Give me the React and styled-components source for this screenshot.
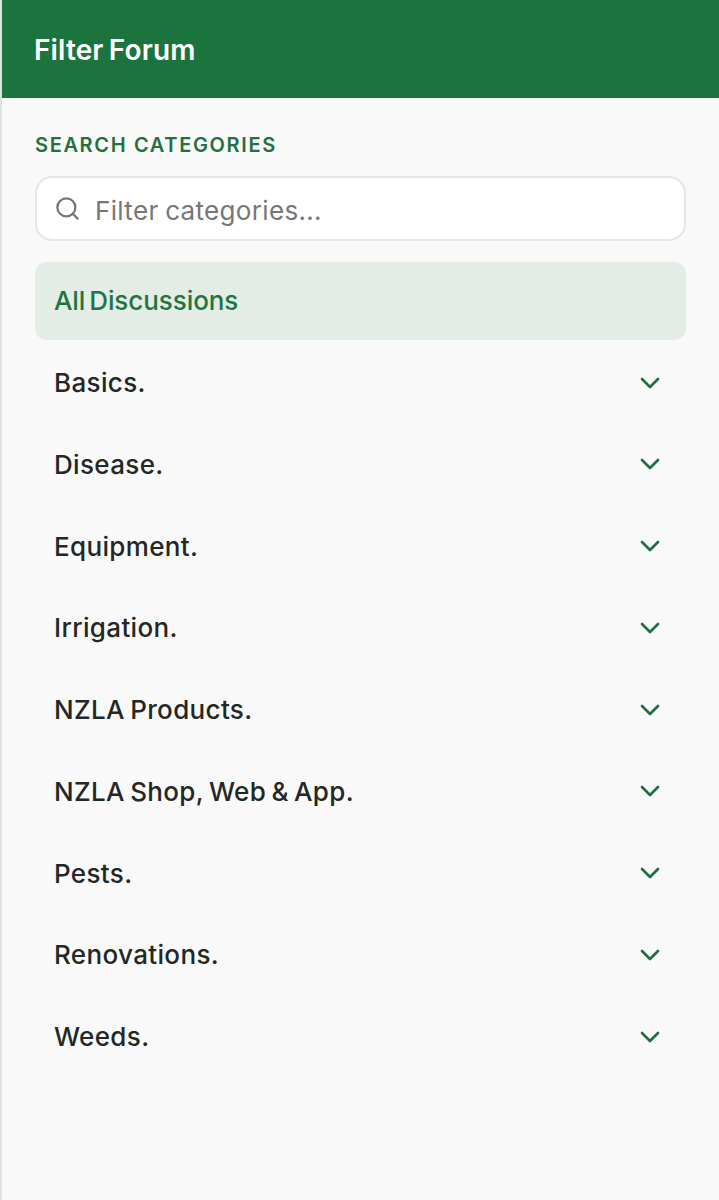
import React from "react";
import styled, { createGlobalStyle } from "styled-components";
import { Search, ChevronDown } from "lucide-react";

const Global = createGlobalStyle`
  html, body { margin: 0; padding: 0; background: #f9f9f9; }
  * { box-sizing: border-box; }
`;

const Panel = styled.div`
  width: 719px;
  height: 1200px;
  overflow: hidden;
  background: #f9f9f9;
  border-left: 2px solid #dde3e0;
  font-family: Inter, "Liberation Sans", sans-serif;
`;

const Header = styled.header`
  height: 98px;
  padding: 2px 32px 0;
  display: flex;
  align-items: center;
  background: #1b733e;
  color: #fff;
`;

const Title = styled.h1`
  margin: 0;
  font-size: 28px;
  line-height: 34px;
  font-weight: 600;
  letter-spacing: 0.13px;
  word-spacing: -2px;
`;

const Body = styled.div`
  padding: 34px 33px 0;
`;

const Label = styled.div`
  font-size: 20px;
  line-height: 26px;
  font-weight: 600;
  letter-spacing: 1.65px;
  color: #24703f;
`;

const SearchBox = styled.label`
  margin-top: 18px;
  height: 65px;
  width: 651px;
  display: flex;
  align-items: center;
  gap: 14px;
  padding-left: 17px;
  background: #fff;
  border: 2px solid #e6e6e6;
  border-radius: 17px;
  color: #737675;
  svg { flex: none; }
`;

const SearchText = styled.span`
  padding-top: 4px;
  font-size: 26px;
  line-height: 32px;
  letter-spacing: 0.33px;
  word-spacing: -1px;
  color: #757877;
`;

const List = styled.div`
  margin-top: 21px;
  display: flex;
  flex-direction: column;
  gap: 4px;
`;

const Row = styled.div`
  width: 651px;
  height: 77.75px;
  padding: 0 20px 0 19px;
  display: flex;
  align-items: center;
  justify-content: space-between;
  border-radius: 12px;
  font-size: 26px;
  font-weight: 500;
  letter-spacing: ${(p) => (p.$active ? "-0.07px" : "0.35px")};
  word-spacing: ${(p) => (p.$active ? "-3px" : "-2px")};
  background: ${(p) => (p.$active ? "#e3ece5" : "transparent")};
  color: ${(p) => (p.$active ? "#1f7542" : "#232725")};
  svg { flex: none; color: #1f7040; }
`;

const categories = [
  "Basics.",
  "Disease.",
  "Equipment.",
  "Irrigation.",
  "NZLA Products.",
  "NZLA Shop, Web & App.",
  "Pests.",
  "Renovations.",
  "Weeds.",
];

export default function App() {
  return (
    <>
      <Global />
      <Panel>
        <Header>
          <Title>Filter Forum</Title>
        </Header>
        <Body>
          <Label>SEARCH CATEGORIES</Label>
          <SearchBox>
            <Search size={27} strokeWidth={2} />
            <SearchText>Filter categories...</SearchText>
          </SearchBox>
          <List>
            <Row $active>All Discussions</Row>
            {categories.map((c) => (
              <Row key={c}>
                {c}
                <ChevronDown size={32} strokeWidth={2} />
              </Row>
            ))}
          </List>
        </Body>
      </Panel>
    </>
  );
}
